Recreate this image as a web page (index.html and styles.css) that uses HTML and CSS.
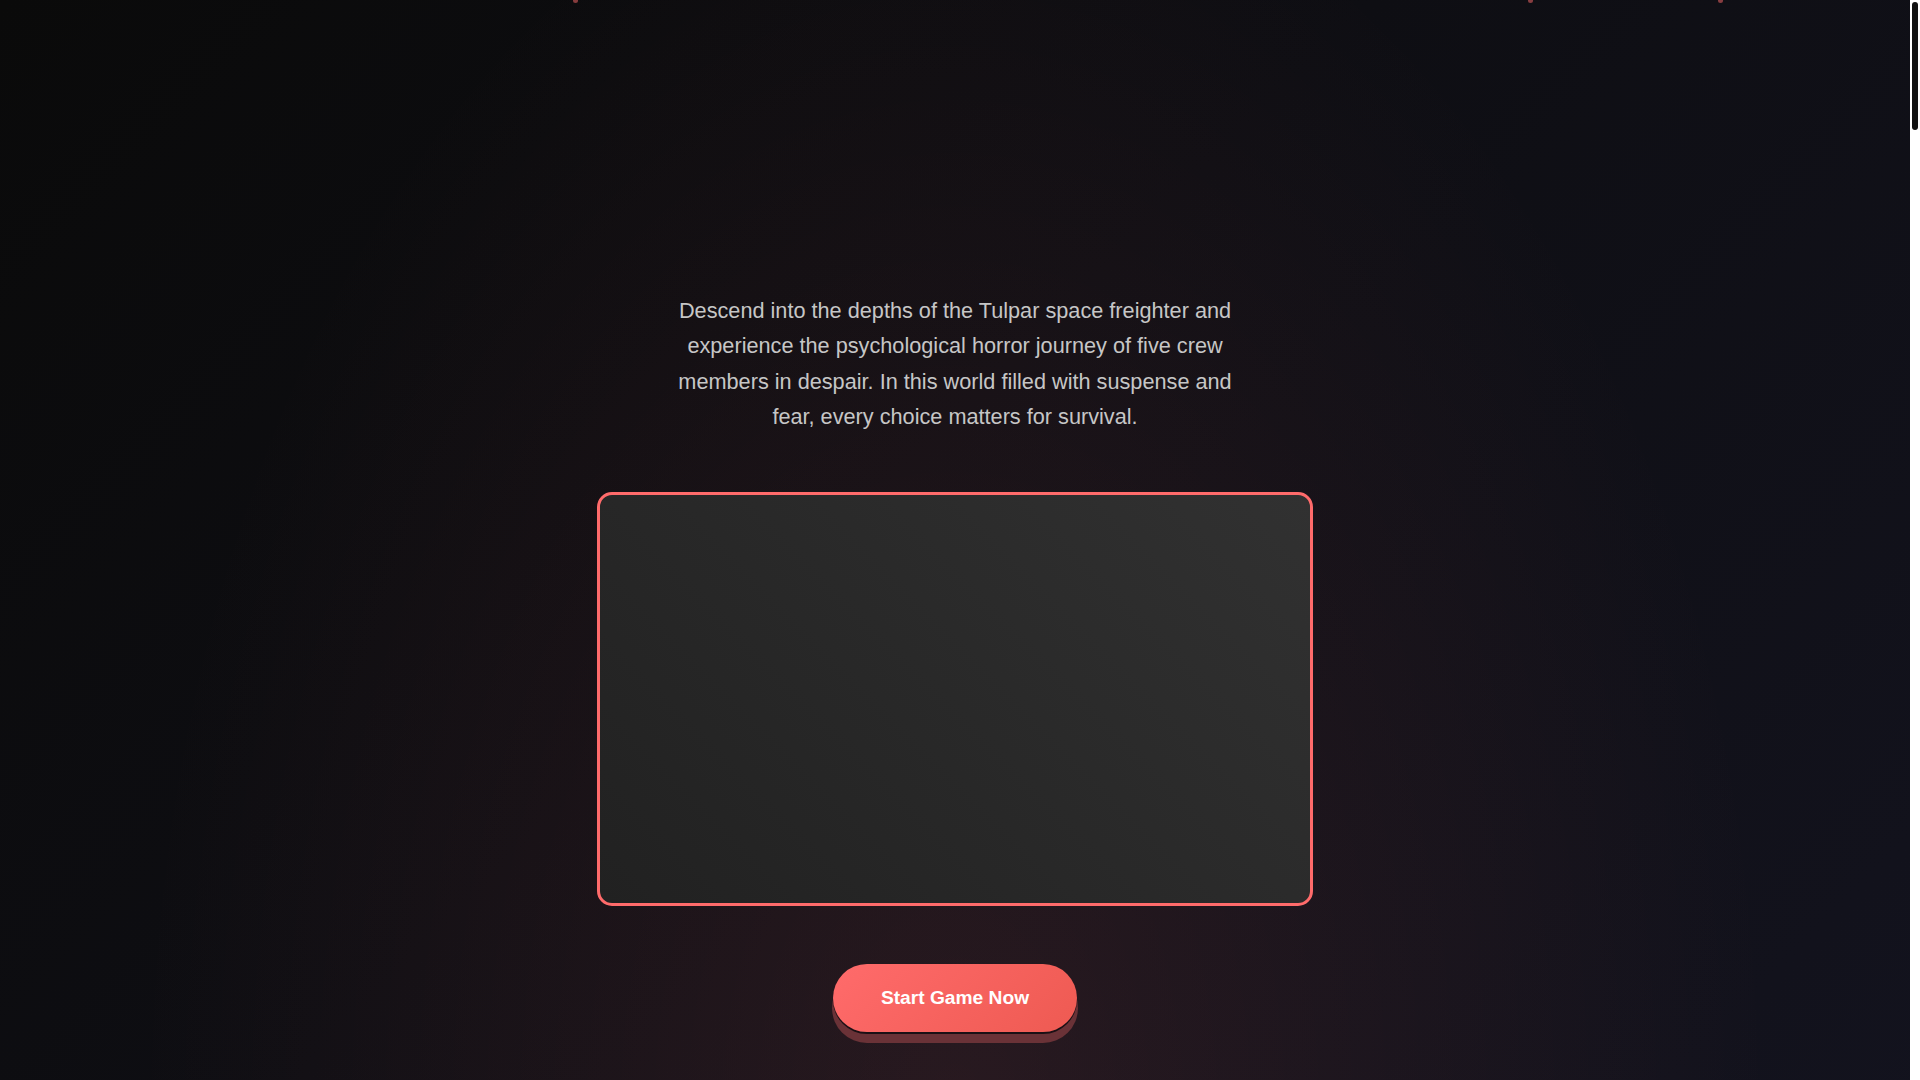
FILE: index.html
```html
<!DOCTYPE html>
<html lang="en">
<head>
  <meta charset="UTF-8" />
  <title>Tulpar - Psychological Horror</title>
  <link rel="stylesheet" href="styles.css">
</head>
<body>
  <main class="page">
    <div class="content">
      <div class="particles">
        <span class="particle p1"></span>
        <span class="particle p2"></span>
        <span class="particle p3"></span>
      </div>

      <section class="hero">
        <p class="intro">Descend into the depths of the Tulpar space freighter and experience the psychological horror journey of five crew members in despair. In this world filled with suspense and fear, every choice matters for survival.</p>

        <div class="trailer"></div>

        <button class="start-btn">Start Game Now</button>
      </section>

      <section class="chapter">
        <h2>The Crew</h2>
        <p>Five people, one ship, and nowhere to run.</p>
      </section>
      <section class="chapter">
        <h2>The Ship</h2>
        <p>Corridors that remember every footstep.</p>
      </section>
      <section class="chapter">
        <h2>Choices</h2>
        <p>Every decision leaves a mark.</p>
      </section>
      <section class="chapter">
        <h2>Endings</h2>
        <p>Not everyone makes it home.</p>
      </section>
    </div>
  </main>

  <!-- custom scroll rail -->
  <div class="rail">
    <div class="rail-thumb"></div>
  </div>
</body>
</html>
```

FILE: styles.css
```css
* { box-sizing: border-box; }

html, body {
  margin: 0;
  padding: 0;
  height: 100%;
  overflow: hidden;
}
body {
  display: flex;
  font-family: 'Liberation Sans', Arial, sans-serif;
  color: #ccc;
  background: #0a0a0a;
}

.page {
  flex: 1;
  height: 100%;
  overflow-y: auto;
  overflow-x: hidden;
  scrollbar-width: none;
}
.page::-webkit-scrollbar { display: none; }

.rail {
  width: 10px;
  flex-shrink: 0;
  padding: 2px;
  background: #fff;
}
.rail-thumb {
  height: 128px;
  border-radius: 3px;
  background: #111;
}

.content {
  position: relative;
  min-height: 9100px;
  background: linear-gradient(135deg, #0a0a0a 0%, #1a1a2e 50%, #16213e 100%);
}

/* floating embers */
.particles {
  position: absolute;
  top: 0;
  left: 0;
  width: 100%;
  height: 10px;
  pointer-events: none;
}
.particle {
  position: absolute;
  top: -2px;
  width: 5px;
  height: 5px;
  border-radius: 50%;
  background: rgba(255, 107, 107, 0.5);
}
.p1 { left: 573px; }
.p2 { left: 1528px; }
.p3 { left: 1718px; }

.hero {
  display: flex;
  flex-direction: column;
  align-items: center;
  padding: 293px 20px 70px;
  background: radial-gradient(ellipse 820px 1300px at 50% 1110px, rgba(255, 107, 107, 0.1), transparent);
}
.intro {
  max-width: 600px;
  margin: 0;
  font-size: 21.7px;
  line-height: 35.3px;
  text-align: center;
  color: #c6c6c6;
}
.trailer {
  width: 716px;
  height: 414px;
  margin-top: 58px;
  border: 3px solid #ff6b6b;
  border-radius: 15px;
  background: linear-gradient(45deg, #212121, #313131);
}
.start-btn {
  margin-top: 58px;
  padding: 23px 48px;
  font-family: inherit;
  font-size: 19.2px;
  line-height: 22px;
  font-weight: bold;
  color: #fff;
  border: none;
  border-radius: 50px;
  background: linear-gradient(135deg, #ff6b6b, #ee5a52);
  box-shadow: 0 2px 0 #1b1015, 0 10px 0 1px #6a3237;
  cursor: pointer;
}
.start-btn:hover {
  background: linear-gradient(135deg, #ff7b7b, #f0625a);
}

.chapter {
  min-height: 1980px;
  padding: 120px 20px;
  text-align: center;
}
.chapter h2 {
  margin: 0 0 16px;
  font-size: 32px;
  color: #ff6b6b;
}
.chapter p {
  margin: 0;
  font-size: 18px;
}
```
